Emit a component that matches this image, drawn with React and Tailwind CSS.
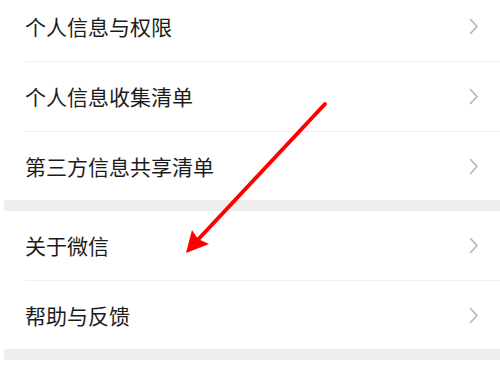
const groups = [
  ['个人信息与权限', '个人信息收集清单', '第三方信息共享清单'],
  ['关于微信', '帮助与反馈'],
];

const Chevron = () => (
  <svg width="10" height="17" viewBox="0 0 10 17" fill="none">
    <path d="M1.5 1.5 L8 8.5 L1.5 15.5" stroke="#b4b4b4" strokeWidth="1.6" strokeLinecap="round" strokeLinejoin="round" />
  </svg>
);

const Row = ({ label, last, height }) => (
  <div className="flex bg-white pl-[21px]" style={{ height }}>
    <div
      className={`flex flex-1 items-center justify-between pr-[21px] ${last ? '' : 'border-b border-[#efefef]'}`}
    >
      <span className="text-[21px] leading-none text-[#1c1c1c]">{label}</span>
      <Chevron />
    </div>
  </div>
);

export default function App() {
  return (
    <div
      className="relative h-[375px] w-[500px] overflow-hidden bg-white pl-[4px]"
      style={{ fontFamily: '"Noto Sans CJK SC", "Noto Sans", sans-serif' }}
    >
      <div className="mt-[-9px]">
        <Row label={groups[0][0]} height={71} />
        <Row label={groups[0][1]} height={70} />
        <Row label={groups[0][2]} height={68} last />
      </div>
      <div className="h-[11px] bg-[#ededed]" />
      <div>
        <Row label={groups[1][0]} height={70} />
        <Row label={groups[1][1]} height={68} last />
      </div>
      <div className="h-[11px] bg-[#ededed]" />

      {/* red annotation arrow */}
      <svg className="pointer-events-none absolute left-0 top-0" width="500" height="375" viewBox="0 0 500 375">
        <line x1="325" y1="104" x2="193" y2="245" stroke="#ff0000" strokeWidth="4" strokeLinecap="round" />
        <path d="M186 253 L192 230 L198 239 L209 244 Z" fill="#ff0000" />
      </svg>
    </div>
  );
}
